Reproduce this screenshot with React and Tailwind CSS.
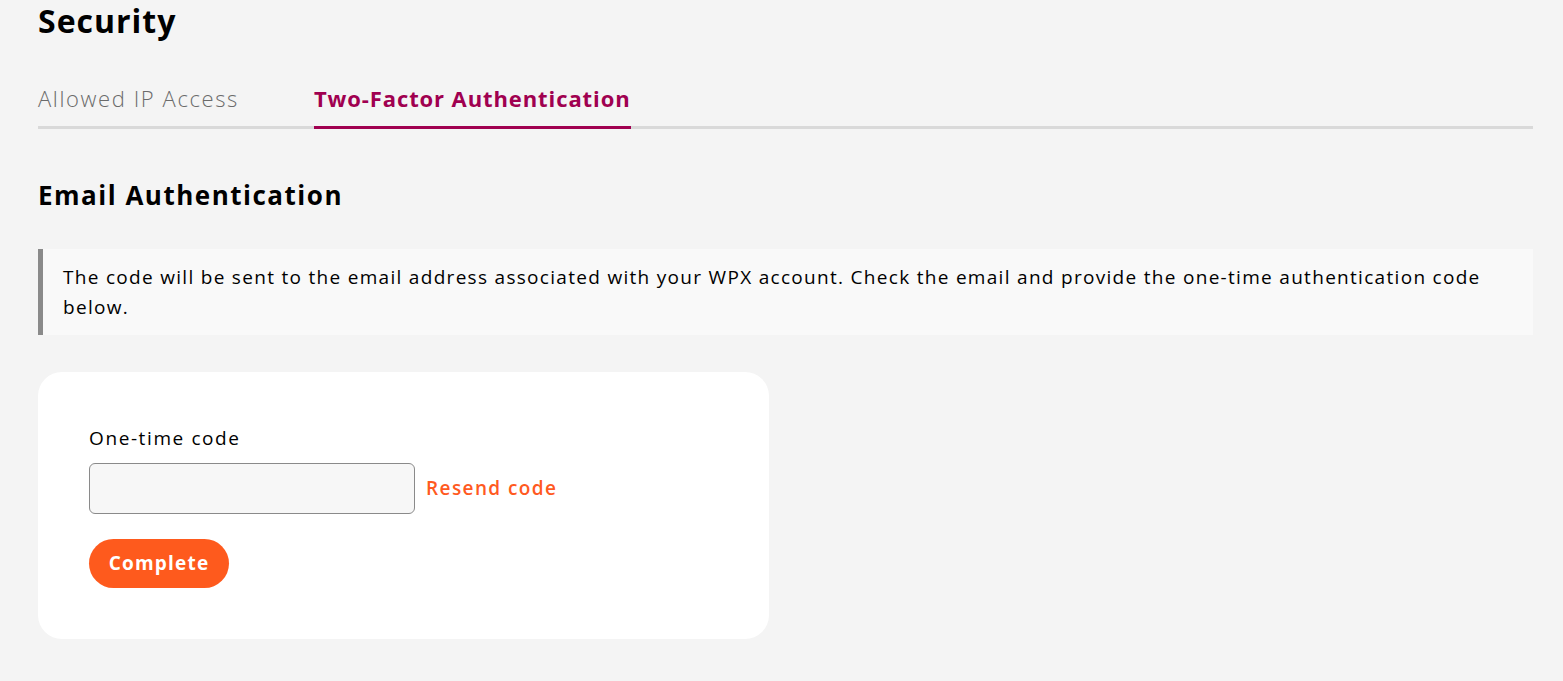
import React from "react";

export default function App() {
  return (
    <div
      className="min-h-[681px] w-full bg-[#f4f4f4] pl-[38px] pr-[30px] text-black"
      style={{ fontFamily: '"Open Sans", "Liberation Sans", sans-serif' }}
    >
      <h1 className="pt-[1px] text-[32px] font-bold leading-[40px] tracking-[1px]">Security</h1>

      <div className="mt-[43px] flex border-b-[3px] border-[#d9d9d9]">
        <button className="-mb-[3px] mr-[75px] border-b-[3px] border-transparent pb-[14px] text-[22px] font-light leading-[28px] tracking-[1.6px] text-[#6b6b6b]">
          Allowed IP Access
        </button>
        <button className="-mb-[3px] border-b-[3px] border-[#a00050] pb-[14px] text-[22px] font-bold leading-[28px] tracking-[0.9px] text-[#a00050]">
          Two-Factor Authentication
        </button>
      </div>

      <h2 className="mt-[48px] text-[26px] font-bold leading-[36px] tracking-[1.5px]">Email Authentication</h2>

      <div className="mt-[36px] border-l-[5px] border-[#8a8a8a] bg-[#f9f9f9] pb-[13px] pl-[20px] pr-[40px] pt-[13px] text-[19px] leading-[30px] tracking-[1.3px]">
        The code will be sent to the email address associated with your WPX account. Check the email and provide the one-time authentication code below.
      </div>

      <div className="mt-[37px] w-[731px] rounded-[24px] bg-white px-[51px] pb-[51px] pt-[52px]">
        <label className="block text-[19px] leading-[28px] tracking-[1.6px]">One-time code</label>
        <div className="mt-[11px] flex items-center">
          <input
            type="text"
            className="h-[51px] w-[326px] rounded-[6px] border border-[#8a8a8a] bg-[#f7f7f7] px-3 outline-none"
          />
          <span className="ml-[11px] text-[19px] font-semibold tracking-[1.4px] text-[#ff5a1f]">Resend code</span>
        </div>
        <button className="mt-[25px] h-[49px] w-[140px] rounded-full bg-[#fe5a1d] text-[19px] font-bold tracking-[1.2px] text-white">
          Complete
        </button>
      </div>
    </div>
  );
}
